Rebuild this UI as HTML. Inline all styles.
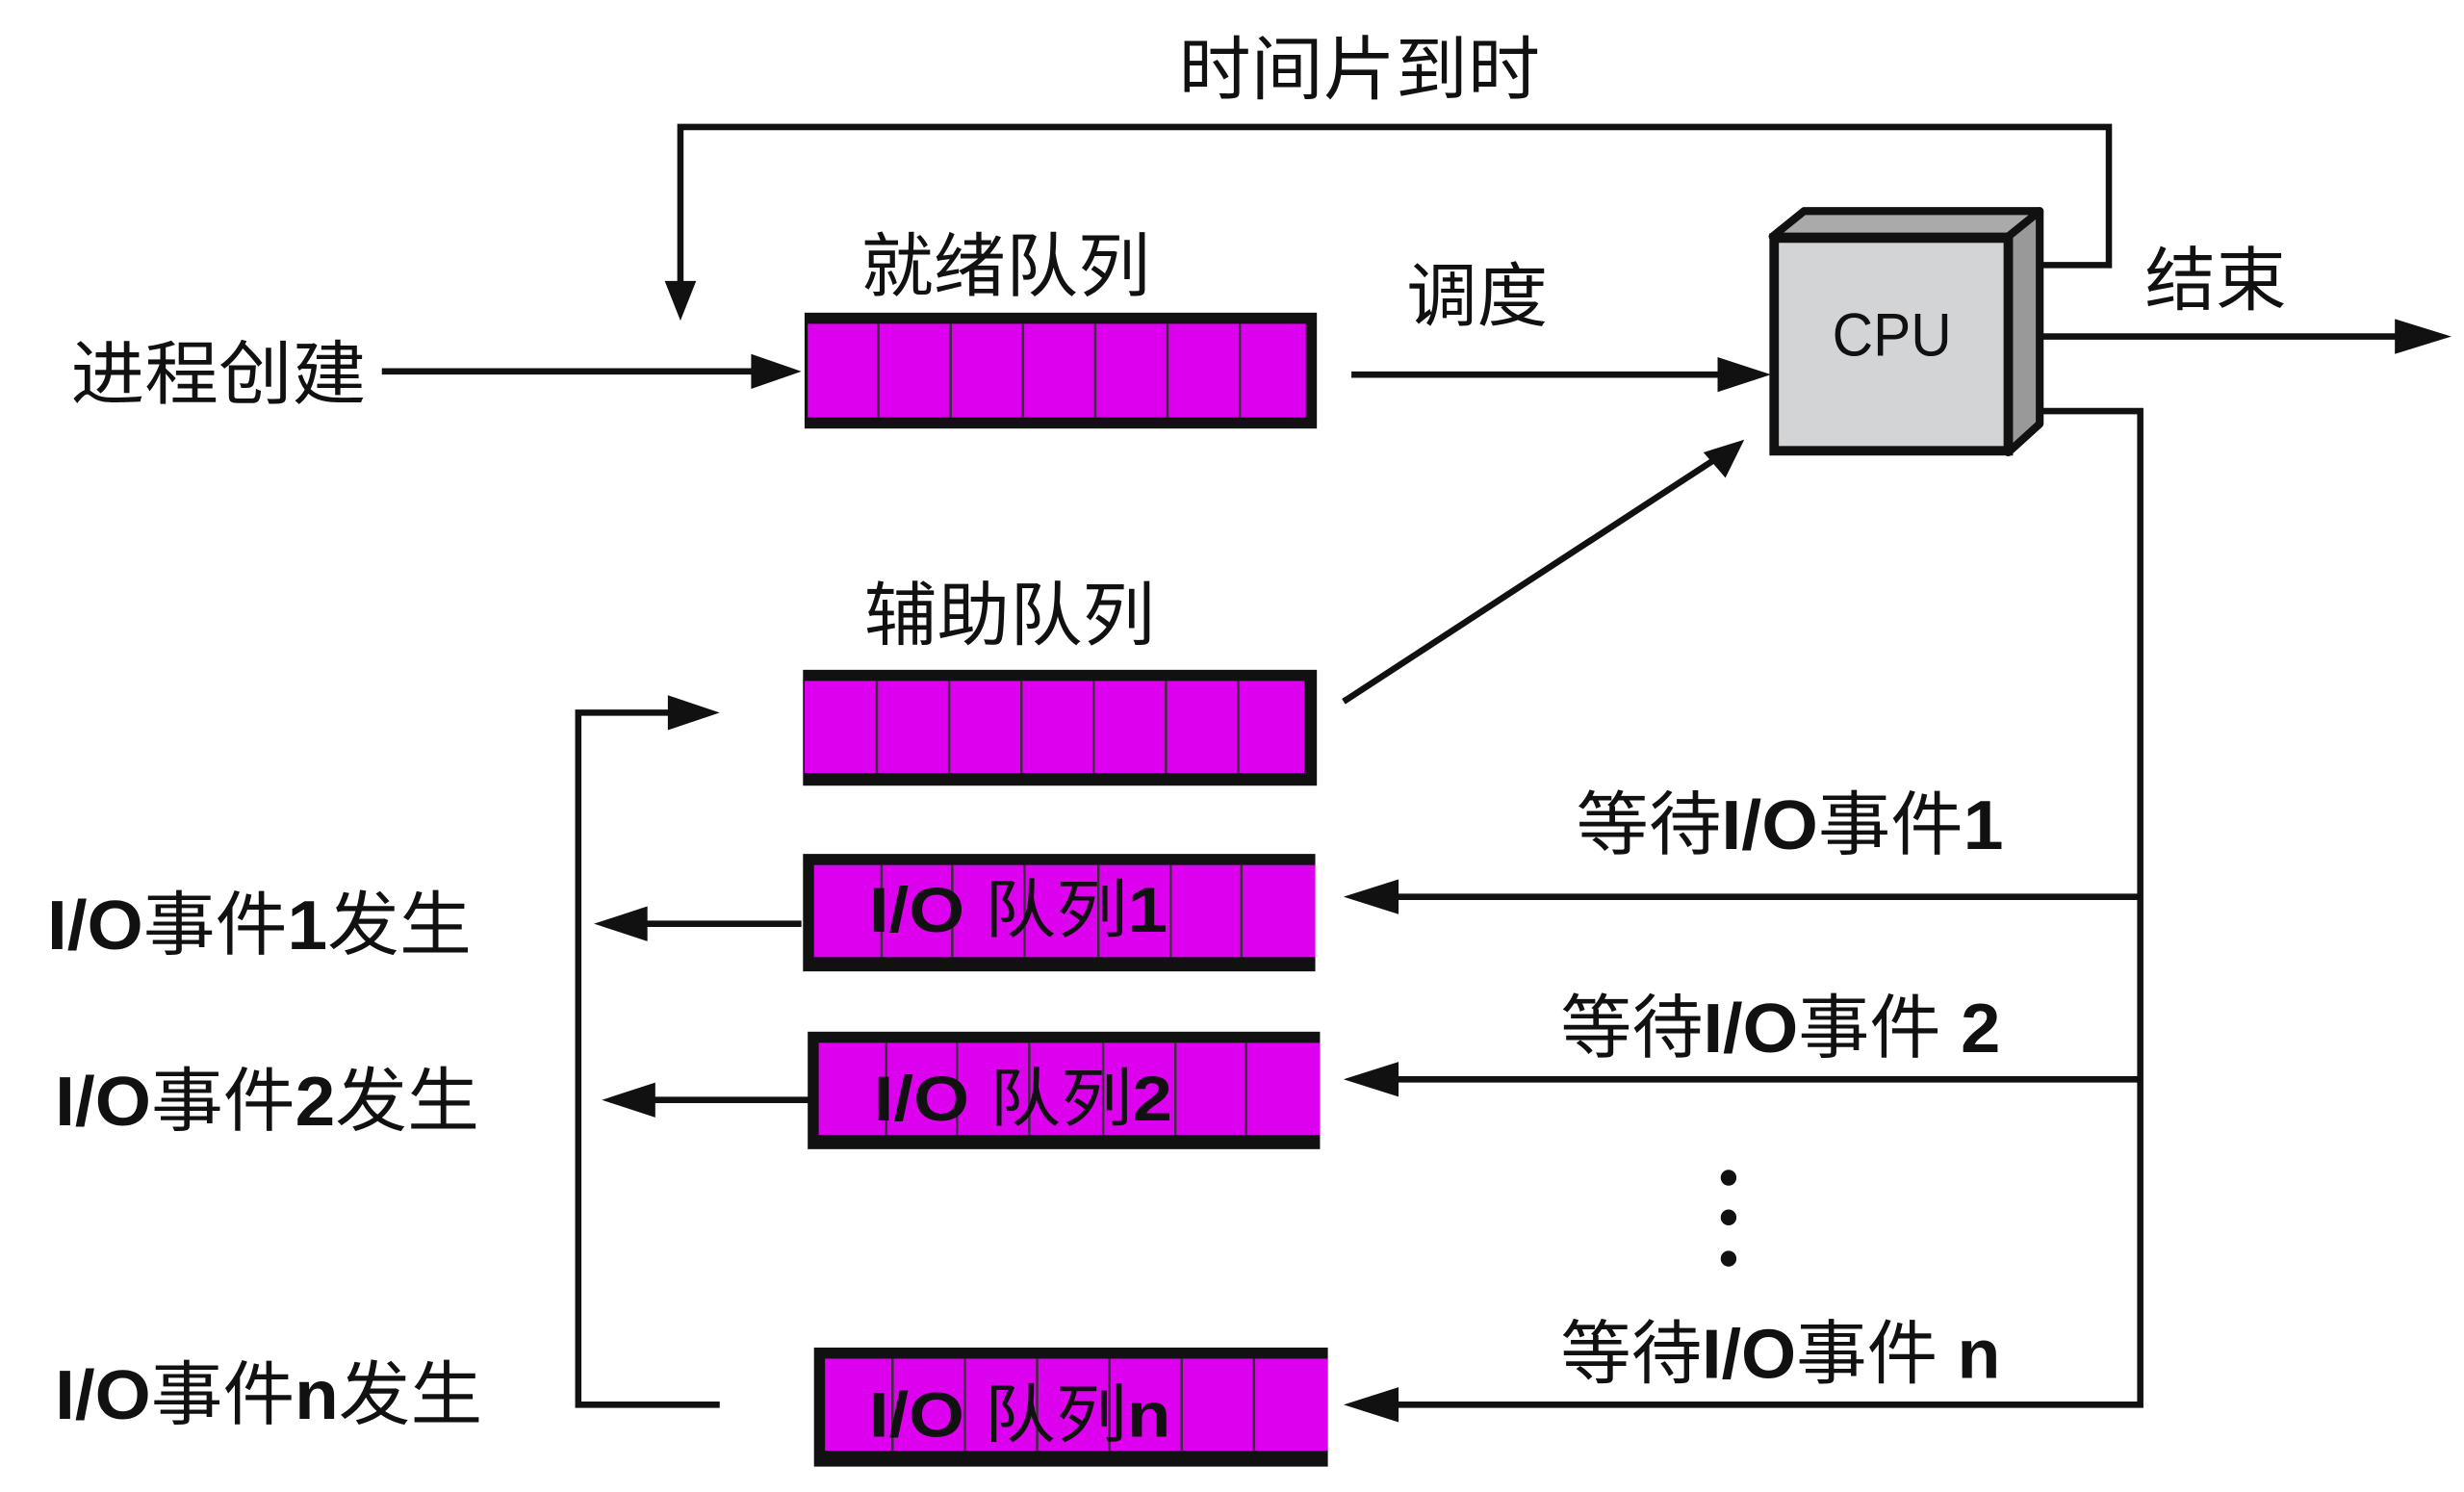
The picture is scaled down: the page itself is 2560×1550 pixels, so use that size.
<!DOCTYPE html>
<html><head><meta charset="utf-8"><style>
html,body{margin:0;padding:0;background:#fff;}
svg{display:block;}
text{font-family:"Liberation Sans","Noto Sans CJK SC",sans-serif;fill:#111;}
.b{font-weight:bold;}
.r{font-weight:normal;}
</style></head><body>
<svg width="2560" height="1550" viewBox="0 0 1568 940" preserveAspectRatio="none" xmlns="http://www.w3.org/2000/svg">
<g transform="translate(0,-3)">
<g stroke="#111" stroke-width="4" fill="none">
<polyline points="1300,170 1342,170 1342,83 433,83 433,185"/>
<line x1="243" y1="237" x2="485" y2="237"/>
<line x1="860" y1="239" x2="1100" y2="239"/>
<line x1="1290" y1="215" x2="1530" y2="215"/>
<line x1="855" y1="445" x2="1092" y2="292"/>
<polyline points="1300,262 1362,262 1362,888 880,888"/>
<line x1="1362" y1="568" x2="880" y2="568"/>
<line x1="1362" y1="683" x2="880" y2="683"/>
<polyline points="458,888 368,888 368,452 432,452"/>
<line x1="510" y1="585" x2="405" y2="585"/>
<line x1="515" y1="696" x2="410" y2="696"/>
</g>
<g fill="#111">
<polygon points="433,205 423,180 443,180"/>
<polygon points="510,237 478,226 478,248"/>
<polygon points="1127,239 1093,228 1093,250"/>
<polygon points="1560,215 1524,204 1524,226"/>
<polygon points="1110,280 1098,304 1084,288"/>
<polygon points="855,568 890,557 890,579"/>
<polygon points="855,683 890,672 890,694"/>
<polygon points="855,888 890,877 890,899"/>
<polygon points="458,452 425,441 425,463"/>
<polygon points="378,585 412,574 412,596"/>
<polygon points="383,696 417,685 417,707"/>
<circle cx="1100" cy="745" r="5"/><circle cx="1100" cy="770" r="5"/><circle cx="1100" cy="796" r="5"/>
</g>
<rect x="512" y="200" width="326" height="73" fill="#111"/>
<rect x="514" y="207" width="317" height="59" fill="#dd00ee"/>
<g stroke="#333" stroke-width="1.5">
<line x1="559" y1="207" x2="559" y2="266"/><line x1="605" y1="207" x2="605" y2="266"/><line x1="651" y1="207" x2="651" y2="266"/><line x1="697" y1="207" x2="697" y2="266"/><line x1="743" y1="207" x2="743" y2="266"/><line x1="789" y1="207" x2="789" y2="266"/>
</g>
<rect x="511" y="425" width="327" height="73" fill="#111"/>
<rect x="512" y="432" width="318" height="58" fill="#dd00ee"/>
<g stroke="#333" stroke-width="1.5">
<line x1="558" y1="432" x2="558" y2="490"/><line x1="604" y1="432" x2="604" y2="490"/><line x1="650" y1="432" x2="650" y2="490"/><line x1="696" y1="432" x2="696" y2="490"/><line x1="742" y1="432" x2="742" y2="490"/><line x1="788" y1="432" x2="788" y2="490"/>
</g>
<rect x="511" y="541" width="326" height="74" fill="#111"/>
<rect x="518" y="548" width="319" height="58" fill="#dd00ee"/>
<g stroke="#333" stroke-width="1.5"><line x1="561" y1="548" x2="561" y2="606"/><line x1="606" y1="548" x2="606" y2="606"/><line x1="652" y1="548" x2="652" y2="606"/><line x1="699" y1="548" x2="699" y2="606"/><line x1="745" y1="548" x2="745" y2="606"/><line x1="790" y1="548" x2="790" y2="606"/></g>
<rect x="514" y="653" width="326" height="74" fill="#111"/>
<rect x="521" y="660" width="319" height="58" fill="#dd00ee"/>
<g stroke="#333" stroke-width="1.5"><line x1="564" y1="660" x2="564" y2="718"/><line x1="609" y1="660" x2="609" y2="718"/><line x1="655" y1="660" x2="655" y2="718"/><line x1="702" y1="660" x2="702" y2="718"/><line x1="748" y1="660" x2="748" y2="718"/><line x1="793" y1="660" x2="793" y2="718"/></g>
<rect x="518" y="852" width="327" height="75" fill="#111"/>
<rect x="525" y="859" width="320" height="58" fill="#dd00ee"/>
<g stroke="#333" stroke-width="1.5"><line x1="568" y1="859" x2="568" y2="917"/><line x1="614" y1="859" x2="614" y2="917"/><line x1="660" y1="859" x2="660" y2="917"/><line x1="706" y1="859" x2="706" y2="917"/><line x1="752" y1="859" x2="752" y2="917"/><line x1="798" y1="859" x2="798" y2="917"/></g>
<polygon points="1128,152 1148,136 1298,136 1278,152" fill="#aaa" stroke="#111" stroke-width="5" stroke-linejoin="round"/>
<polygon points="1278,152 1298,136 1298,270 1278,288" fill="#999" stroke="#111" stroke-width="5" stroke-linejoin="round"/>
<rect x="1129" y="153" width="149" height="134" fill="#d3d4d6" stroke="#111" stroke-width="6"/>
<text x="1166" y="227" font-size="38" textLength="76" lengthAdjust="spacingAndGlyphs">CPU</text>
<text x="750" y="62" font-size="44" textLength="230" lengthAdjust="spacingAndGlyphs">时间片到时</text>
<text x="45" y="254" font-size="44" textLength="188" lengthAdjust="spacingAndGlyphs">进程创建</text>
<text x="548" y="186" font-size="44" textLength="184" lengthAdjust="spacingAndGlyphs">就绪队列</text>
<text x="895" y="205" font-size="44" textLength="90" lengthAdjust="spacingAndGlyphs">调度</text>
<text x="1365" y="195" font-size="44" textLength="90" lengthAdjust="spacingAndGlyphs">结束</text>
<text x="550" y="406" font-size="44" textLength="185" lengthAdjust="spacingAndGlyphs">辅助队列</text>
<text class="b" x="553" y="590" font-size="40" textLength="190" lengthAdjust="spacingAndGlyphs">I/O <tspan class="r">队列</tspan>1</text>
<text class="b" x="556" y="709" font-size="40" textLength="190" lengthAdjust="spacingAndGlyphs">I/O <tspan class="r">队列</tspan>2</text>
<text class="b" x="553" y="908" font-size="40" textLength="192" lengthAdjust="spacingAndGlyphs">I/O <tspan class="r">队列</tspan>n</text>
<text class="b" x="30" y="601" font-size="44" textLength="270" lengthAdjust="spacingAndGlyphs">I/O<tspan class="r">事件</tspan>1<tspan class="r">发生</tspan></text>
<text class="b" x="35" y="712" font-size="44" textLength="270" lengthAdjust="spacingAndGlyphs">I/O<tspan class="r">事件</tspan>2<tspan class="r">发生</tspan></text>
<text class="b" x="35" y="897" font-size="44" textLength="272" lengthAdjust="spacingAndGlyphs">I/O<tspan class="r">事件</tspan>n<tspan class="r">发生</tspan></text>
<text class="b" x="1003" y="538" font-size="44" textLength="272" lengthAdjust="spacingAndGlyphs"><tspan class="r">等待</tspan>I/O<tspan class="r">事件</tspan>1</text>
<text class="b" x="993" y="666" font-size="44" textLength="280" lengthAdjust="spacingAndGlyphs"><tspan class="r">等待</tspan>I/O<tspan class="r">事件</tspan> 2</text>
<text class="b" x="993" y="871" font-size="44" textLength="280" lengthAdjust="spacingAndGlyphs"><tspan class="r">等待</tspan>I/O<tspan class="r">事件</tspan> n</text>
</g>
</svg>
</body></html>
